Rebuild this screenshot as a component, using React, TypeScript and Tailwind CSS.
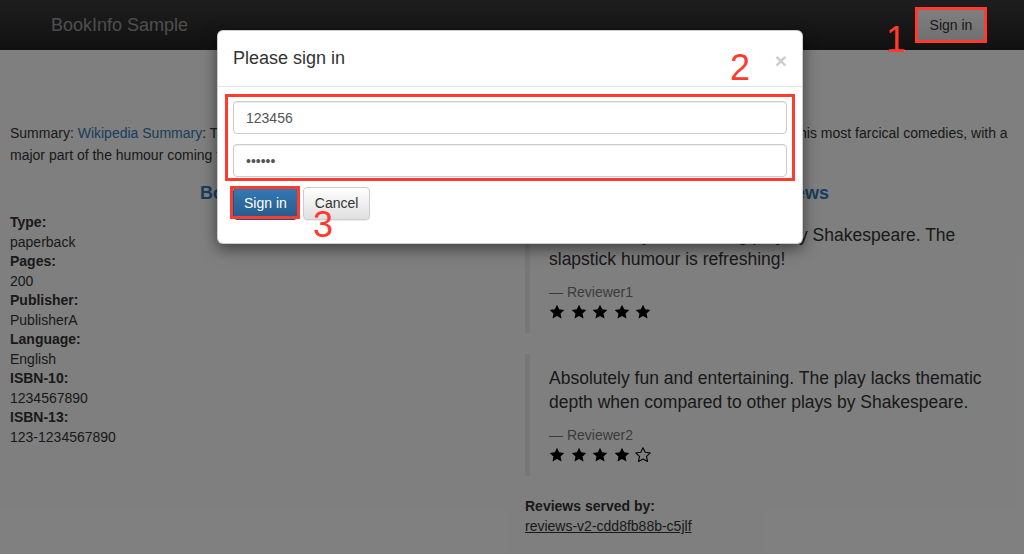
import React from "react";

type Review = {
  text: string;
  reviewer: string;
  stars: number;
};

const reviews: Review[] = [
  {
    text: "An extremely entertaining play by Shakespeare. The slapstick humour is refreshing!",
    reviewer: "Reviewer1",
    stars: 5,
  },
  {
    text: "Absolutely fun and entertaining. The play lacks thematic depth when compared to other plays by Shakespeare.",
    reviewer: "Reviewer2",
    stars: 4,
  },
];

const details: [string, string][] = [
  ["Type:", "paperback"],
  ["Pages:", "200"],
  ["Publisher:", "PublisherA"],
  ["Language:", "English"],
  ["ISBN-10:", "1234567890"],
  ["ISBN-13:", "123-1234567890"],
];

function Star({ filled }: { filled: boolean }) {
  return (
    <svg width="16" height="16" viewBox="0 0 24 24">
      <path
        d="M12 1l3.3 7 7.7.9-5.7 5.3 1.5 7.6L12 18l-6.8 3.8 1.5-7.6L1 8.9l7.7-.9z"
        fill={filled ? "#000" : "none"}
        stroke="#000"
        strokeWidth={filled ? 0 : 1.6}
        strokeLinejoin="round"
      />
    </svg>
  );
}

function Stars({ count }: { count: number }) {
  return (
    <div className="flex h-[20px] items-center gap-[5.5px]">
      {[0, 1, 2, 3, 4].map((i) => (
        <Star key={i} filled={i < count} />
      ))}
    </div>
  );
}

function Mark({ children, className }: { children: React.ReactNode; className: string }) {
  // red numbered annotation drawn on top of the screenshot
  return (
    <span
      className={
        "pointer-events-none absolute z-50 text-[36px] leading-none text-[#ff3a2f] " + className
      }
    >
      {children}
    </span>
  );
}

export default function App() {
  return (
    <div className="relative h-[554px] overflow-hidden bg-white font-['Liberation_Sans',Arial,sans-serif] text-[14px] text-[#333]">
      <nav className="flex h-[50px] items-center justify-between bg-gradient-to-b from-[#3c3c3c] to-[#222] pl-[51px] pr-[37px]">
        <span className="text-[18px] text-[#9d9d9d]">BookInfo Sample</span>
        <div className="relative">
          <button className="h-[34px] w-[72px] rounded-[4px] border border-[#ccc] bg-gradient-to-b from-white to-[#e0e0e0] text-[14px] text-[#333]">
            Sign in
          </button>
          <span className="pointer-events-none absolute -bottom-[1px] -top-[1px] left-0 right-0 z-50 border-[3px] border-[#ff3a2f]" />
          <Mark className="-left-[29px] top-[14px]">1</Mark>
        </div>
      </nav>

      <main className="px-[10px] pt-[40px]">
        <h3 className="text-center text-[24px] leading-[26px] font-medium">The Comedy of Errors</h3>
        <p className="mt-[6px] leading-[22px]">
          Summary: <a className="text-[#337ab7]">Wikipedia Summary</a>: The Comedy of Errors is one
          of William Shakespeare's early plays. It is his shortest and one of his most farcical
          comedies, with a major part of the humour coming from slapstick and mistaken identity, in
          addition to puns and word play.
        </p>

        <div className="mt-[17px] grid grid-cols-2">
          <section className="pr-[13px]">
            <h4 className="text-center text-[18px] leading-[20px] font-bold text-[#337ab7]">
              Book Details
            </h4>
            <dl className="mt-[10px] leading-[19.5px]">
              {details.map(([k, v]) => (
                <React.Fragment key={k}>
                  <dt className="font-bold">{k}</dt>
                  <dd>{v}</dd>
                </React.Fragment>
              ))}
            </dl>
          </section>

          <section className="pl-[13px] pr-[3px]">
            <h4 className="text-center text-[18px] leading-[20px] font-bold text-[#337ab7]">
              Book Reviews
            </h4>
            <div className="mt-[8px]">
              {reviews.map((r, i) => (
                <blockquote
                  key={r.reviewer}
                  className={
                    "border-l-[5px] border-[#eee] pb-[11px] pl-[19px] pr-[20px] pt-[12px] " +
                    (i === 0 ? "mb-[21px]" : "mb-[20px]")
                  }
                >
                  <p className="text-[17.5px] leading-[24px]">{r.text}</p>
                  <div className="mt-[11px] text-[14px] leading-[20px] text-[#777]">
                    — {r.reviewer}
                  </div>
                  <Stars count={r.stars} />
                </blockquote>
              ))}
            </div>
            <div className="leading-[20px]">
              <div className="font-bold">Reviews served by:</div>
              <u>reviews-v2-cdd8fb88b-c5jlf</u>
            </div>
          </section>
        </div>
      </main>

      <div className="absolute inset-0 z-40 bg-black/50" />

      <div className="absolute left-[217px] top-[30px] z-50 w-[586px] rounded-[6px] border border-black/20 bg-white shadow-[0_5px_15px_rgba(0,0,0,0.5)]">
        <div className="flex items-start justify-between border-b border-[#e5e5e5] p-[15px]">
          <h4 className="text-[18px] leading-[25px] font-medium text-[#333]">Please sign in</h4>
          <button className="mt-[4px] text-[21px] leading-none font-bold text-black opacity-20">
            ×
          </button>
        </div>
        <div className="px-[15px] pb-[23px] pt-[14px]">
          <div className="relative flex flex-col gap-[10px]">
            <input
              readOnly
              defaultValue="123456"
              className="h-[33px] w-full rounded-[4px] border border-[#ccc] px-[12px] text-[14px] text-[#555] shadow-[inset_0_1px_1px_rgba(0,0,0,0.075)] outline-none"
            />
            <input
              readOnly
              type="password"
              defaultValue="123456"
              className="h-[33px] w-full rounded-[4px] border border-[#ccc] px-[12px] text-[14px] text-[#555] shadow-[inset_0_1px_1px_rgba(0,0,0,0.075)] outline-none"
            />
            <span className="pointer-events-none absolute -bottom-[4px] -left-[8px] -right-[8px] -top-[7px] border-[3px] border-[#ff3a2f]" />
          </div>
          <div className="mt-[10px] flex gap-[5px]">
            <div className="relative">
              <button className="h-[33px] rounded-[4px] border border-[#245580] bg-gradient-to-b from-[#337ab7] to-[#265a88] px-[10px] text-[14px] text-white">
                Sign in
              </button>
              <span className="pointer-events-none absolute -left-[3px] -right-[2px] -top-[1px] bottom-[1px] border-[3px] border-[#ff3a2f]" />
            </div>
            <button className="h-[33px] rounded-[4px] border border-[#ccc] bg-gradient-to-b from-white to-[#e0e0e0] px-[11px] text-[14px] text-[#333] shadow-[0_1px_1px_rgba(0,0,0,0.075)]">
              Cancel
            </button>
          </div>
        </div>
        <Mark className="left-[512px] top-[19px]">2</Mark>
        <Mark className="left-[95px] top-[176px]">3</Mark>
      </div>
    </div>
  );
}
